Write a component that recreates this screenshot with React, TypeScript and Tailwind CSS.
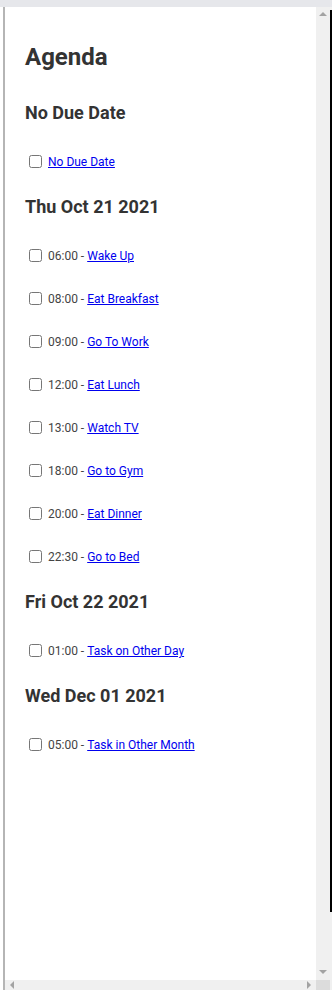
import React from "react";

type Item = { time?: string; title: string };
type Section = { heading: string; items: Item[] };

const sections: Section[] = [
  { heading: "No Due Date", items: [{ title: "No Due Date" }] },
  {
    heading: "Thu Oct 21 2021",
    items: [
      { time: "06:00", title: "Wake Up" },
      { time: "08:00", title: "Eat Breakfast" },
      { time: "09:00", title: "Go To Work" },
      { time: "12:00", title: "Eat Lunch" },
      { time: "13:00", title: "Watch TV" },
      { time: "18:00", title: "Go to Gym" },
      { time: "20:00", title: "Eat Dinner" },
      { time: "22:30", title: "Go to Bed" },
    ],
  },
  { heading: "Fri Oct 22 2021", items: [{ time: "01:00", title: "Task on Other Day" }] },
  { heading: "Wed Dec 01 2021", items: [{ time: "05:00", title: "Task in Other Month" }] },
];

function Row({ item, first }: { item: Item; first: boolean }) {
  return (
    <div className={`flex items-center h-[20px] text-[12px] text-[#444] ${first ? "mt-[27px]" : "mt-[23px]"}`}>
      <input type="checkbox" className="m-0 ml-[4px] mr-[6px] mb-[2px] w-[13px] h-[13px]" />
      {item.time && <span className="mr-[3px]">{item.time} -</span>}
      <a href="#" className="text-[#0000ee] underline">
        {item.title}
      </a>
    </div>
  );
}

export default function App() {
  return (
    <div
      className="w-[332px] h-[990px] flex flex-col bg-white overflow-hidden"
      style={{ fontFamily: "Roboto, 'Liberation Sans', sans-serif" }}
    >
      <div className="h-[7px] bg-[#e6e7eb] shrink-0" />
      <div className="flex flex-1 min-h-0">
        <div className="w-[3px] bg-white shrink-0" />
        <div className="w-[2px] bg-[#b5b5b5] shrink-0" />
        <div className="flex flex-col flex-1 min-w-0">
          <div className="flex flex-1 min-h-0">
            <div className="flex-1 pl-[20px] text-[#333]">
              <h1 className="mt-[36px] text-[24px] leading-[28px] font-bold">Agenda</h1>
              {sections.map((s, i) => (
                <div key={s.heading}>
                  <h2 className={`${i === 0 ? "mt-[30px]" : "mt-[23px]"} text-[18px] leading-[24px] font-bold`}>
                    {s.heading}
                  </h2>
                  {s.items.map((it, j) => (
                    <Row key={it.title} item={it} first={j === 0} />
                  ))}
                </div>
              ))}
            </div>
            <div className="w-[14px] bg-[#f0f0f0] flex flex-col items-center justify-between shrink-0">
              <div className="mt-[5px] w-0 h-0 border-l-[4px] border-r-[4px] border-b-[4px] border-l-transparent border-r-transparent border-b-[#a3a3a3]" />
              <div className="mb-[6px] w-0 h-0 border-l-[4px] border-r-[4px] border-t-[4px] border-l-transparent border-r-transparent border-t-[#a3a3a3]" />
            </div>
          </div>
          <div className="h-[10px] flex shrink-0">
            <div className="flex-1 bg-[#f0f0f0] flex items-center justify-between px-[5px]">
              <div className="w-0 h-0 border-t-[4px] border-b-[4px] border-r-[4px] border-t-transparent border-b-transparent border-r-[#a3a3a3]" />
              <div className="w-0 h-0 border-t-[4px] border-b-[4px] border-l-[4px] border-t-transparent border-b-transparent border-l-[#a3a3a3]" />
            </div>
            <div className="w-[14px] bg-[#dcdcdc]" />
          </div>
        </div>
        <div className="w-[2px] shrink-0 bg-[#f0f0f0] flex flex-col">
          <div className="mt-[3px] h-[902px] bg-black" />
        </div>
      </div>
    </div>
  );
}
